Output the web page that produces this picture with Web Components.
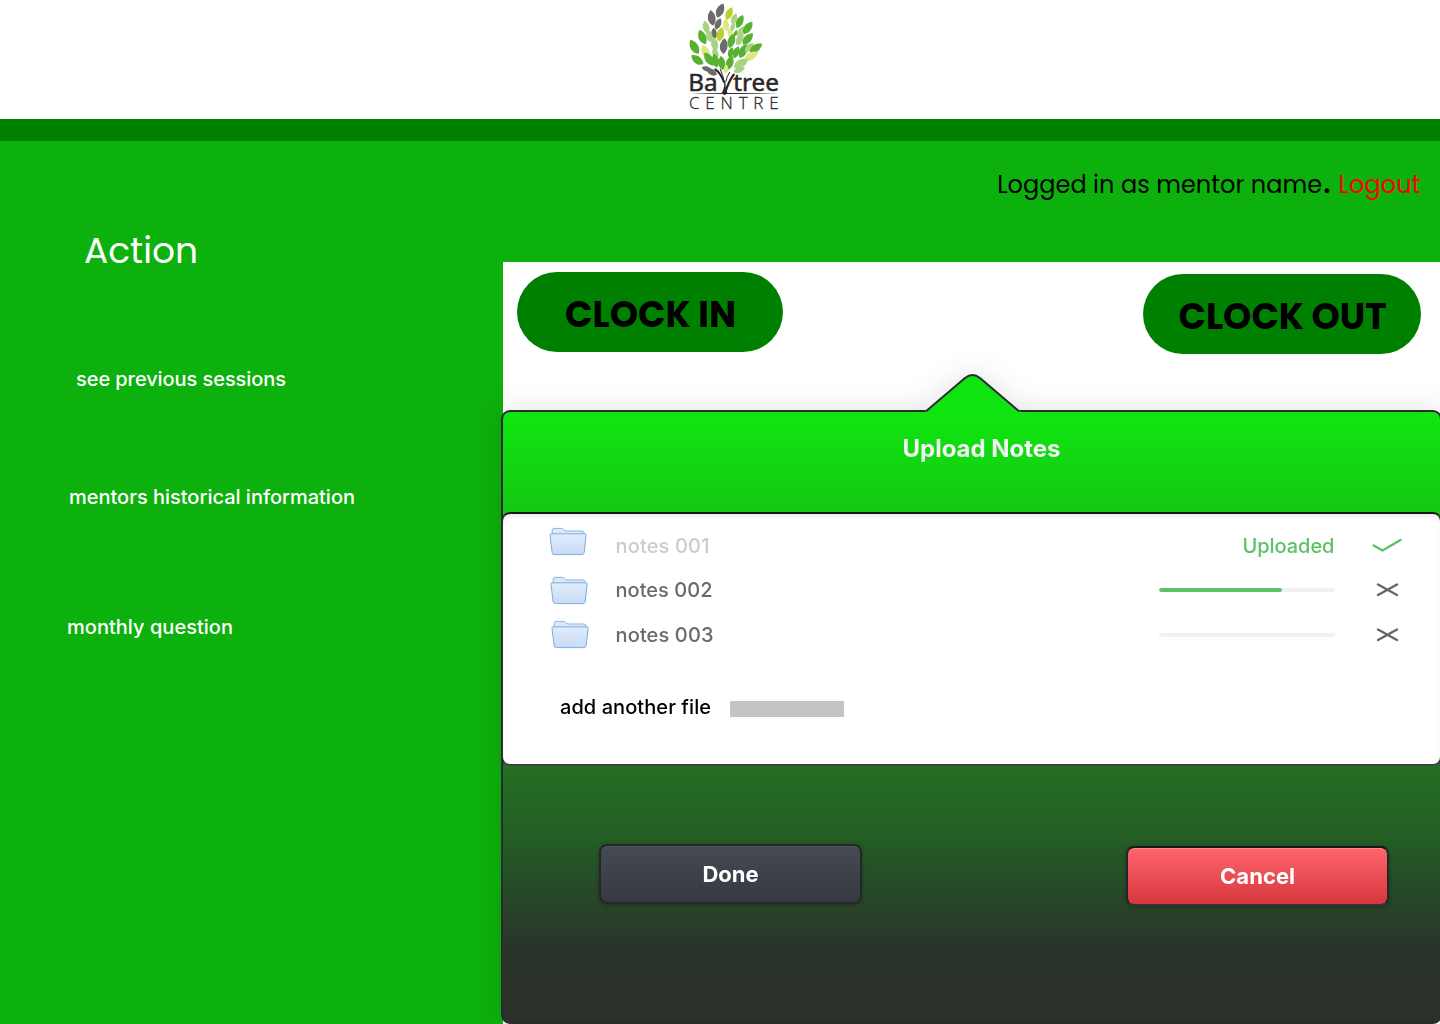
<!DOCTYPE html>
<html lang="en"><head><meta charset="utf-8"><title>Baytree Centre</title>
<style>
html,body{margin:0;width:1440px;height:1024px;overflow:hidden;background:#fff;font-family:Inter,"Liberation Sans",sans-serif}
</style></head><body>
<baytree-app></baytree-app>
<script>
const define=(name,html,init)=>customElements.define(name,class extends HTMLElement{
  connectedCallback(){
    if(this.shadowRoot)return;
    const t=document.createElement('template');t.innerHTML=html;
    this.attachShadow({mode:'open'}).append(t.content.cloneNode(true));
    if(init)init.call(this,this.shadowRoot);
  }});

/* a single line of text, tracked so that it fills the width given in w */
define('fit-text','<style>:host{display:block;white-space:pre;line-height:1;flex:none}span{display:inline-block}</style><span><slot></slot></span>',function(r){
  const s=r.querySelector('span'),w=+this.getAttribute('w'),n=this.textContent.length;
  s.style.letterSpacing='0';const c=s.getBoundingClientRect().width;
  if(c)s.style.letterSpacing=((w-c)/(n-1))+'px';
  this.style.width=w+'px';
});

define('baytree-logo',`<style>:host{display:block;width:110px;height:120px}svg{display:block}</style>
<svg width="110" height="120" viewBox="0 0 330 360"><g id="leaves"></g>
<g fill="none" stroke="#2b2728" stroke-linecap="round">
<path d="M106 208Q121 218 132 246" stroke-width="6"/><path d="M161 224Q146 244 134 282" stroke-width="7"/><path d="M121 208Q129 225 134 250" stroke-width="3"/><path d="M149 217Q141 226 137 246" stroke-width="3"/></g>
<path d="M32 280.500Q130 277 296 280.500Q130 284 32 280.500Z" fill="#2b2728"/><path d="M123 281Q132 272 133 250H137Q135 270 144 281Z" fill="#2b2728"/>
<g fill="#2b2728" stroke="#2b2728" stroke-width="1.5" font-family="'Noto Sans','Open Sans',sans-serif" font-size="71">
<text x="25" y="274" textLength="88" lengthAdjust="spacingAndGlyphs">Ba</text>
<text x="160" y="274" textLength="137" lengthAdjust="spacingAndGlyphs">tree</text></g>
<text x="27" y="327" fill="#2b2728" stroke="#2b2728" stroke-width=".8" font-size="51" font-weight="300" textLength="269" font-family="'Open Sans',sans-serif">CENTRE</text></svg>`,function(r){
  const C={G:'#58b131',L:'#a9d383',Y:'#dce682',O:'#bccf2b',D:'#6c6b6c'};
  const leaves=[['D',120,32,20,45],['O',147,41,20,40],['D',95,54,-12,46],['D',114,72,20,36],['G',179,65,22,42],['L',162,57,18,34],['Y',138,75,-8,36],['D',102,101,-8,34],['L',78,82,-18,38],['O',121,103,10,44],['Y',152,101,-30,34],['L',158,81,15,26],['G',167,100,15,20],['L',182,96,26,36],['G',203,84,32,44],['G',67,112,-26,46],['L',88,108,-16,38],['L',104,133,-14,42],['D',131,139,2,46],['G',154,123,14,44],['L',179,118,24,40],['G',203,117,38,44],['G',43,141,-34,48],['Y',77,157,-28,46],['L',106,160,-20,36],['G',152,158,14,32],['G',168,157,18,38],['G',189,153,24,46],['L',207,143,38,36],['G',227,144,52,44],['Y',213,168,58,46],['G',52,180,-56,44],['G',87,178,-38,46],['G',106,182,-14,42],['G',125,189,-10,42],['G',149,188,14,44],['Y',138,208,6,26],['L',182,190,58,48],['L',177,209,64,36],['D',80,207,-76,30],['D',95,216,-62,36]];
  r.querySelector('#leaves').innerHTML=leaves.map(([c,x,y,a,l])=>`<path fill="${C[c]}" transform="translate(${x} ${y}) rotate(${a}) scale(${l/44})" d="M2-23C14-10 15 10 0 22C-15 12-15-10 2-23Z"/>`).join('');
});

define('clock-button',`<style>:host{display:flex;box-sizing:border-box;height:80px;border-radius:40px;background:#008000;color:#000;align-items:center;justify-content:center;padding:5px 0 0 1px;font:700 36px Poppins,Inter,sans-serif}</style><slot></slot>`);

define('folder-icon',`<style>:host{display:block;width:39px;height:30px}svg{display:block}</style>
<svg width="39" height="30" viewBox="0 0 39 30"><defs><linearGradient id="f" x2="0" y2="1"><stop stop-color="#e1ecfc"/><stop offset="1" stop-color="#c9dbf6"/></linearGradient></defs>
<path d="M3.2 8V3.5Q3.2 1.5 5 1.4H12.5Q14 1.4 14.800 2.7Q15.600 4 17 4H33Q35 4 35.200 6V8Z" fill="#dce9fb" stroke="#86b5e2"/>
<path d="M2.2 6.8H35.800Q37.300 6.8 37.100 8.3L35.200 25.500Q34.900 27.600 32.800 27.600H5.500Q3.400 27.600 3.100 25.500L1 8.3Q.8 6.8 2.2 6.8Z" fill="url(#f)" stroke="#7aade0"/></svg>`);

define('progress-bar',`<style>:host{display:block;width:176px;height:4px;border-radius:2px;background:#f1f1f1;overflow:hidden}div{height:4px;border-radius:2px;background:#5dc264;width:var(--value,0)}</style><div></div>`);

define('mark-icon',`<style>:host{display:block;width:32px;height:20px}svg{display:block}</style><svg width="32" height="20" viewBox="0 0 32 20" fill="none" stroke-width="2.4" stroke-linecap="round" stroke-linejoin="round"></svg>`,function(r){
  r.querySelector('svg').innerHTML=this.getAttribute('kind')==='check'?'<path stroke="#5dc264" d="M2.700 9.500L11.500 14.500L29.500 4"/>':'<path stroke="#666" d="M7 4.500L26 15M7 15L26 4.500"/>';
});

define('file-row',`<style>:host{display:flex;align-items:center;box-sizing:border-box;color:#6a6a6a;font-size:20px;font-weight:500;padding-left:46px;padding-right:37px}
.icon{width:66.5px;flex:none}folder-icon{margin-left:var(--fx,0);margin-top:var(--fy,0)}.state{margin-left:auto;display:flex;justify-content:flex-end}mark-icon{margin-left:36.5px}</style>
<div class="icon"><folder-icon></folder-icon></div><slot></slot><div class="state"><slot name="state"></slot></div><mark-icon></mark-icon>`,function(r){
  if(this.hasAttribute('done')){const n=document.createElement('mark-icon');n.setAttribute('kind','check');r.querySelector('mark-icon').replaceWith(n)}
});

define('dialog-button',`<style>:host{display:flex;box-sizing:border-box;width:263px;height:60px;border:2px solid #25262d;border-radius:8px;align-items:center;justify-content:center;color:#fff;font-weight:700;font-size:22px;background:linear-gradient(#454a53,#363941);box-shadow:0 1px 4px #0004,inset 0 1px #ffffff12}
:host([danger]){border-color:#17181c #25262c #33343c;background:linear-gradient(#ff646d,#d5383c) padding-box;box-shadow:0 1px 4px #0004,inset 0 1px #ffffff38}</style><slot></slot>`);

define('upload-popover',`<style>
:host{display:flex;flex-direction:column;position:relative;box-sizing:border-box;width:941px;height:614px;margin-left:-2px;border:2px solid #292b31;border-radius:9px;background:linear-gradient(#0fe60f 0%,#15c415 18.5%,#246f22 58%,#235d24 70%,#2a342a 88%,#2b312a 100%);filter:drop-shadow(0 2px 15px #00000022)}
.arrow{position:absolute;left:420px;top:-40px}
.head{height:100px;display:flex;justify-content:center;padding-top:25px;padding-left:20px;box-sizing:border-box;color:#f2f2f2;font-weight:700;font-size:24px;flex:none}
.card{margin:0 -2px;height:254px;box-sizing:border-box;border:2px solid;border-color:#16171c #2c2d33 #40414a;border-radius:9px;background:#fff;box-shadow:inset 0 5px 6px -3px #00000018;padding-top:10px;flex:none}
.add{display:flex;align-items:center;padding:38px 0 0 57px;font-size:20px;font-weight:500;color:#000}
.slot{width:114px;height:16px;background:#c4c4c4;margin:3px 0 0 19px}
.foot{display:flex;justify-content:space-between;padding:78px 51px 0 96px}
dialog-button[danger]{margin-top:2px}
</style>
<svg class="arrow" width="100" height="42" viewBox="0 0 100 42"><path d="M2 42V39.500H3.500L42 6Q49.500 0 57 6L95.500 39.500H98V42Z" fill="#10e410"/><path d="M3 39.300L42 6Q49.500 0 57 6L96 39.300" fill="none" stroke="#292b31" stroke-width="2"/></svg>
<div class="head"><fit-text w="158">Upload Notes</fit-text></div>
<div class="card">
<file-row done style="height:44px;--fy:-9px"><fit-text w="94" style="color:#ccc">notes 001</fit-text><fit-text slot="state" w="92" style="color:#5dc264">Uploaded</fit-text></file-row>
<file-row style="height:43px;--fx:1px;--fy:2px"><fit-text w="97">notes 002</fit-text><progress-bar slot="state" style="--value:123px"></progress-bar></file-row>
<file-row style="height:48px;--fx:2px;--fy:-1px"><fit-text w="98">notes 003</fit-text><progress-bar slot="state"></progress-bar></file-row>
<div class="add"><fit-text w="151">add another file</fit-text><div class="slot"></div></div>
</div>
<div class="foot"><dialog-button><fit-text w="56">Done</fit-text></dialog-button><dialog-button danger><fit-text w="75">Cancel</fit-text></dialog-button></div>`);

define('side-nav',`<style>:host{display:flex;flex-direction:column;width:503px;box-sizing:border-box;flex:none;color:#fff;font-size:20px;font-weight:500;padding-top:92px}
h1{margin:0;font:400 36px Poppins,"DejaVu Sans",sans-serif;padding-left:84px}
.a{margin:100px 0 0 76px}.b{margin:98px 0 0 69px}.c{margin:110px 0 0 67px}</style>
<h1><fit-text w="114">Action</fit-text></h1><fit-text class="a" w="210">see previous sessions</fit-text><fit-text class="b" w="286">mentors historical information</fit-text><fit-text class="c" w="166">monthly question</fit-text>`);

define('session-line',`<style>:host{display:flex;justify-content:flex-end;align-items:center;height:121px;box-sizing:border-box;padding:0 19.5px 34px 0;font:400 24px Poppins,"DejaVu Sans",sans-serif;color:#000}b{font:700 28px/1 Inter,sans-serif;margin:-4px 7px 0 0}.out{color:#f00}</style>
<fit-text w="325">Logged in as mentor name</fit-text><b>.</b><fit-text class="out" w="82">Logout</fit-text>`);

define('baytree-app',`<style>:host{display:flex;flex-direction:column;width:1440px;height:1024px;overflow:hidden}
header{height:119px;flex:none;display:flex;padding-left:680px;background:#fff}.bar{height:22px;background:#008000;flex:none}
.body{display:flex;flex:1;background:#0db10d;min-height:0}.main{width:937px;flex:none;display:flex;flex-direction:column}
.panel{background:#fff;flex:1;min-height:0}.clocks{display:flex;justify-content:space-between;height:148px;padding:10px 19px 0 14px;box-sizing:border-box}</style>
<header><baytree-logo></baytree-logo></header><div class="bar"></div>
<div class="body"><side-nav></side-nav><div class="main"><session-line></session-line><div class="panel">
<div class="clocks"><clock-button style="width:266px"><fit-text w="171">CLOCK IN</fit-text></clock-button><clock-button style="width:278px;margin-top:2px"><fit-text w="208">CLOCK OUT</fit-text></clock-button></div>
<upload-popover></upload-popover></div></div></div>`);
</script></body></html>
